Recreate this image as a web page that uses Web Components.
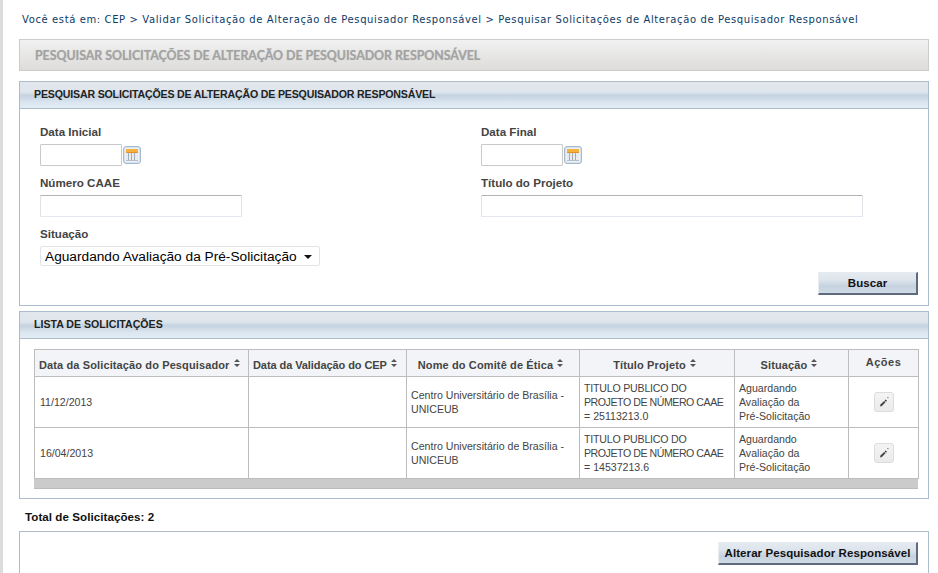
<!DOCTYPE html>
<html lang="pt-BR">
<head>
<meta charset="utf-8">
<title>Pesquisar Solicitações</title>
<style>
html,body{margin:0;padding:0;height:573px;overflow:hidden;background:#fff}
body{font-family:"Liberation Sans",Arial,sans-serif}
</style>
</head>
<body>
<x-page>
  <x-breadcrumb>Você está em: CEP &gt; Validar Solicitação de Alteração de Pesquisador Responsável &gt; Pesquisar Solicitações de Alteração de Pesquisador Responsável</x-breadcrumb>
  <x-title-bar>PESQUISAR SOLICITAÇÕES DE ALTERAÇÃO DE PESQUISADOR RESPONSÁVEL</x-title-bar>
  <x-panel heading="PESQUISAR SOLICITAÇÕES DE ALTERAÇÃO DE PESQUISADOR RESPONSÁVEL" style="--panel-h:225px;--hs:-.17px">
    <x-search-form></x-search-form>
  </x-panel>
  <x-panel heading="LISTA DE SOLICITAÇÕES" style="--panel-h:188px;--hs:0;margin-top:5px">
    <x-data-table></x-data-table>
  </x-panel>
  <x-total>Total de Solicitações: 2</x-total>
  <x-panel style="--panel-h:60px">
    <x-actions><x-button style="width:200px">Alterar Pesquisador Responsável</x-button></x-actions>
  </x-panel>
</x-page>
<script>
function def(name, css, html, init){
  customElements.define(name, class extends HTMLElement{
    constructor(){
      super();
      const r=this.attachShadow({mode:'open'});
      r.innerHTML='<style>'+css+'</style>'+(typeof html==='function'?html(this):html);
    }
    connectedCallback(){ if(init) init(this); }
  });
}
const FONT='"Liberation Sans",Arial,sans-serif';

def('x-page',`:host{display:block;box-sizing:border-box;width:938px;height:573px;padding:0 9px 0 19px;overflow:hidden;background:linear-gradient(90deg,#dcdcdc 0,#dcdcdc 3px,#fff 3px)}`,'<slot></slot>');

def('x-breadcrumb',`:host{display:block;margin-left:3px;padding-top:13px;height:39px;box-sizing:border-box;font:10px/13px "DejaVu Sans",Verdana,sans-serif;letter-spacing:.61px;color:#0d3b66;white-space:nowrap}`,'<slot></slot>');

def('x-title-bar',`:host{display:block;box-sizing:border-box;height:32px;border:1px solid #ccc;padding:0 15px;background:linear-gradient(#f1f1f1,#dddcda);font:bold 12.4px/31px Lato,${FONT};letter-spacing:-.05px;color:#a3a3a3;text-shadow:0 0 1px rgba(160,160,160,.6);white-space:nowrap;margin-bottom:10px}`,'<slot></slot>');

def('x-panel',`:host{display:block;box-sizing:border-box;height:var(--panel-h,auto);border:1px solid #adbccd;background:#fff}
.h{box-sizing:border-box;height:27px;border-bottom:1px solid #adbccd;padding-left:14px;font:bold 10.6px/24px ${FONT};color:#222;letter-spacing:var(--hs,0);white-space:nowrap;background:linear-gradient(#e2e7ee 0,#dfe5ec 38%,#c5d3e0 52%,#dbe6f0 80%,#e2ecf5 100%)}`,
 el=>(el.getAttribute('heading')?'<div class="h">'+el.getAttribute('heading')+'</div>':'')+'<slot></slot>');

def('x-cal-icon',`:host{display:block;width:18px;height:18px;flex:none}svg{display:block}`,
`<svg width="18" height="18" viewBox="0 0 18 18"><rect x=".5" y=".5" width="17" height="17" rx="2.5" fill="#d6e2ee" stroke="#a7bbce"/><rect x="2.5" y="2.5" width="13" height="13" fill="#fff"/><rect x="3" y="3" width="12" height="3" fill="#f6b13d"/><rect x="3" y="6" width="12" height="1" fill="#e2922a"/><path d="M3 7h12v8H3z" fill="#e9ecef"/><path d="M5.5 7v8M8.5 7v8M11.5 7v8" stroke="#a3adb8"/><path d="M3 14.5h12" stroke="#b5bec8"/></svg>`);

def('x-input',`:host{display:block;box-sizing:border-box;height:22px;width:var(--w,100px);background:#fff;border:1px solid #dfe3e8;border-top-color:#b4b4b4;border-bottom-color:#e4e9f0;border-radius:1px}
:host([date]){border:1px solid #c9c9c9}`,'');

def('x-field',`:host{display:block;padding-top:1px}
label{display:block;font:bold 11.6px/14px ${FONT};color:#444;height:14px;white-space:nowrap}
.row{display:flex;align-items:center;gap:1px;margin-top:5px}`,
el=>`<label>${el.getAttribute('label')}</label><div class="row"><slot></slot></div>`);

def('x-select',`:host{display:flex;align-items:center;box-sizing:border-box;width:280px;height:20px;background:#fff;border:1px solid #e1e5ea;border-radius:2px;padding:1px 4px 0;font:13.7px/18px ${FONT};color:#000;white-space:nowrap;justify-content:space-between}
i{width:0;height:0;border:4px solid transparent;border-top:4px solid #111;border-bottom:0;margin-right:3px}`,
'<span><slot></slot></span><i></i>');

def('x-button',`:host{display:block;box-sizing:border-box;width:100px;height:23px;border:1px solid #e8edf2;border-right:2px solid #5d6b7c;border-bottom:2px solid #5d6b7c;border-top-color:#e6ebf1;background:linear-gradient(#e5eaf0 0,#dde4ec 35%,#c6d3df 65%,#cfdbe6 100%);font:bold 11.5px/20px ${FONT};color:#111;text-align:center;white-space:nowrap;letter-spacing:.08px}`,'<slot></slot>');

def('x-actions',`:host{display:flex;justify-content:flex-end;padding:10px 10px 0 0}`,'<slot></slot>');

def('x-search-form',`:host{display:block;box-sizing:border-box;height:196px;padding:15px 10px 0 20px}
.g{display:grid;grid-template-columns:441px 1fr;grid-template-rows:51px 51px auto}
x-actions{padding:6px 0 0}`,
`<div class="g">
 <x-field label="Data Inicial"><x-input date style="--w:82px"></x-input><x-cal-icon></x-cal-icon></x-field>
 <x-field label="Data Final"><x-input date style="--w:82px"></x-input><x-cal-icon></x-cal-icon></x-field>
 <x-field label="Número CAAE"><x-input style="--w:202px"></x-input></x-field>
 <x-field label="Título do Projeto"><x-input style="--w:382px"></x-input></x-field>
 <x-field label="Situação"><x-select>Aguardando Avaliação da Pré-Solicitação</x-select></x-field>
</div>
<x-actions><x-button>Buscar</x-button></x-actions>`);

def('x-sort',`:host{display:inline-block;vertical-align:top;margin-left:4px;margin-top:1px}svg{display:block}`,
`<svg width="6" height="8" viewBox="0 0 6 8"><path d="M3 0l3 3H0zM0 5h6L3 8z" fill="#555"/></svg>`);

def('x-edit',`:host{display:inline-block;box-sizing:border-box;width:20px;height:20px;border:1px solid #dcdcdc;border-radius:3px;background:linear-gradient(#f4f4f4,#ebebeb);vertical-align:middle}svg{display:block;margin:2px}`,
`<svg width="14" height="14" viewBox="0 0 14 14"><path d="M3 11.4l.5-1.9 3.6-3.6 1.4 1.4-3.6 3.6z" fill="#444"/><path d="M7.6 5.4l1-1 1.4 1.4-1 1z" fill="#333"/><path d="M10.4 2.6h1M10.9 2.1v1" stroke="#555" stroke-width=".6"/></svg>`);

const tt=(n)=>`<span style="letter-spacing:-.2px">TITULO PUBLICO DO</span><br><span style="letter-spacing:-.45px">PROJETO DE NÚMERO CAAE</span><br>= ${n}`;
const sit='Aguardando<br>Avaliação da<br>Pré-Solicitação';
const rows=[
 ['11/12/2013','','Centro Universitário de Brasília - UNICEUB',tt('25113213.0'),sit],
 ['16/04/2013','','Centro Universitário de Brasília - UNICEUB',tt('14537213.6'),sit]
];
const heads=[['Data da Solicitação do Pesquisador',214,'l'],['Data da Validação do CEP',158,'l v'],['Nome do Comitê de Ética',173,'c'],['Título Projeto',155,'c'],['Situação',114,'c'],['Ações',70,'a']];
def('x-data-table',`:host{display:block;padding:10px 10px 0 14px}
.w{background:#cbcbcb;padding-bottom:9px;border-bottom:1px solid #bbb;width:884px;box-sizing:border-box}
table{border-collapse:collapse;table-layout:fixed;width:884px;background:#fff;font:10.6px/14.1px ${FONT};color:#444}
th,td{border:1px solid #bdbdbd;padding:0 4px;overflow:hidden}
th{height:27px;box-sizing:border-box;padding-top:4px;background:#f2f4f7;font:bold 11px/14px ${FONT};letter-spacing:.12px;color:#444;white-space:nowrap;text-align:center}
th.l{text-align:left}
th.v{letter-spacing:-.08px}
th.c{padding-right:9px}
th.a{padding-top:0;padding-bottom:2px;letter-spacing:.5px}
td{height:51px;box-sizing:border-box;text-align:left}
td:first-child{padding-left:5px}
td.e{text-align:center}`,
`<div class="w"><table><colgroup>${heads.map(h=>`<col style="width:${h[1]}px">`).join('')}</colgroup>
<thead><tr>${heads.map(h=>`<th class="${h[2]}">${h[0]}${h[2]!=='a'?'<x-sort></x-sort>':''}</th>`).join('')}</tr></thead>
<tbody>${rows.map(r=>`<tr>${r.map(c=>`<td>${c}</td>`).join('')}<td class="e"><x-edit></x-edit></td></tr>`).join('')}</tbody></table></div>`);

def('x-total',`:host{display:block;box-sizing:border-box;height:32px;padding:11px 0 0 6px;font:bold 11.6px/14px ${FONT};color:#111;letter-spacing:.05px}`,'<slot></slot>');
</script>
</body>
</html>
